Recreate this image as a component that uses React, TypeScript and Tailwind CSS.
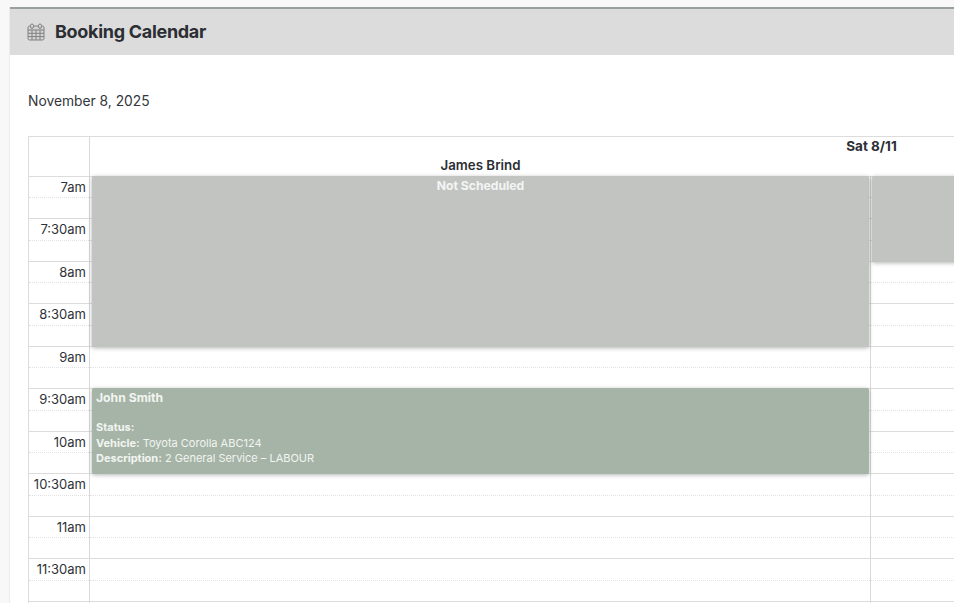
const slots = ["7am", "7:30am", "8am", "8:30am", "9am", "9:30am", "10am", "10:30am", "11am", "11:30am", ""];

function CalendarIcon() {
  return (
    <svg width="18" height="18" viewBox="0 0 18 18" fill="none" stroke="#808080" strokeWidth="1" className="shrink-0">
      <rect x="1" y="3" width="16" height="14" rx="1.5" fill="#d4d4d4" />
      <path d="M1 7h16M1 10.3h16M1 13.6h16M5 7v10M9 7v10M13 7v10" />
      <rect x="3.6" y="1" width="2.8" height="4.4" rx="1.4" fill="#dcdcdc" />
      <rect x="11.6" y="1" width="2.8" height="4.4" rx="1.4" fill="#dcdcdc" />
    </svg>
  );
}

function Slot({ label }: { label: string }) {
  return (
    <div className="flex">
      <div className="w-[60px] shrink-0">
        <div className="h-[21.25px] border-t border-[#dcdcdc] pr-[3px] text-right text-[13px] leading-[20.4px] text-[#2f3237]">{label}</div>
        <div className="h-[21.25px] border-t border-dotted border-[#e2e2e2]" />
      </div>
      <div className="w-[781px] shrink-0 border-l border-[#d8d8d8]">
        <div className="h-[21.25px] border-t border-[#dcdcdc]" />
        <div className="h-[21.25px] border-t border-dotted border-[#e2e2e2]" />
      </div>
      <div className="w-[782px] shrink-0 border-l border-[#d8d8d8]">
        <div className="h-[21.25px] border-t border-[#dcdcdc]" />
        <div className="h-[21.25px] border-t border-dotted border-[#e2e2e2]" />
      </div>
    </div>
  );
}

export default function App() {
  return (
    <div className="h-[603px] w-[954px] overflow-hidden bg-[#f8f8f8] pl-[9px] pt-[7px] font-['Inter',sans-serif] text-[#2f3237]">
      <div className="h-[596px] w-[1700px] border-l border-[#ececec] bg-white">
        <div className="flex h-[48px] items-center gap-[10px] border-t-2 border-[#97a09d] bg-[#dcdcdc] pl-[17px]">
          <CalendarIcon />
          <h1 className="text-[18px] leading-none font-bold tracking-[-0.3px] text-[#2b2e33]">Booking Calendar</h1>
        </div>
        <div className="pl-[18px] pt-[38px]">
          <p className="text-[13.8px] leading-[17px] text-[#33363b]">November 8, 2025</p>
          <div className="relative mt-[26px] w-[1625px] border-t border-l border-[#dcdcdc]">
            <div className="flex h-[38.75px]">
              <div className="w-[60px] shrink-0" />
              <div className="flex-1 border-l border-[#d8d8d8]">
                <div className="h-[19px] pt-[1px] text-center text-[13.5px] leading-[17px] font-bold text-[#2b2e33]">Sat 8/11</div>
                <div className="flex h-[19px]">
                  <div className="w-[781px] pt-[1px] text-center text-[13.3px] leading-[17px] font-semibold text-[#2b2e33]">James Brind</div>
                </div>
              </div>
            </div>
            {slots.map((s, i) => (
              <Slot key={i} label={s} />
            ))}
            <div className="absolute left-[63px] top-[39px] h-[171px] w-[777px] rounded-[2px] bg-[#c2c4c2] text-center text-[12.2px] leading-[20px] font-bold text-[#f4f4f4] shadow-[0_1px_4px_rgba(0,0,0,0.3)]">
              Not Scheduled
            </div>
            <div className="absolute left-[843px] top-[39px] h-[86px] w-[782px] rounded-[2px] bg-[#c2c4c2] shadow-[0_1px_4px_rgba(0,0,0,0.3)]" />
            <div className="absolute left-[63px] top-[251px] h-[86px] w-[777px] rounded-[2px] bg-[#a5b4a6] px-[4px] pt-[1px] text-[11px] leading-[15.5px] text-[#f2f4f2] shadow-[0_1px_4px_rgba(0,0,0,0.3)]">
              <div className="text-[12.2px] leading-[18px] font-bold">John Smith</div>
              <div className="h-[13px]" />
              <div className="font-bold">Status:</div>
              <div><span className="font-bold">Vehicle:</span> Toyota Corolla ABC124</div>
              <div><span className="font-bold">Description:</span> 2 General Service – LABOUR</div>
            </div>
          </div>
        </div>
      </div>
    </div>
  );
}
